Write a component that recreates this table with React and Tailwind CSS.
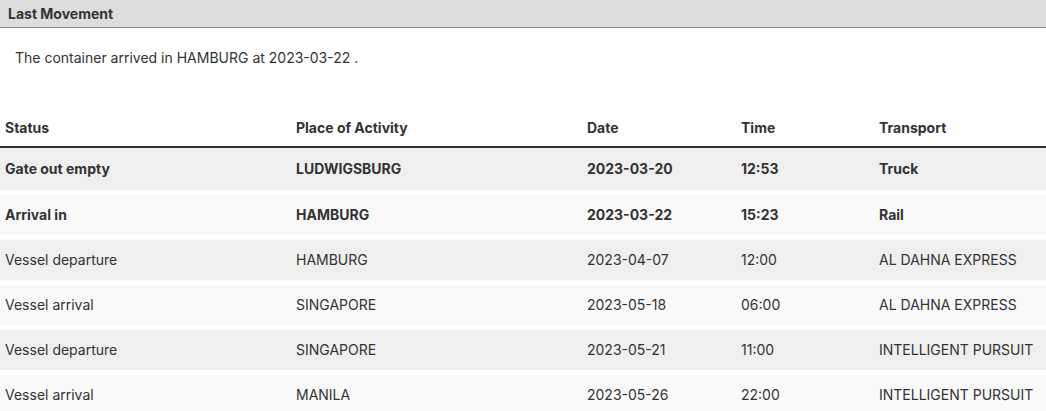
import React from 'react';

const movements = [
  { status: 'Gate out empty', place: 'LUDWIGSBURG', date: '2023-03-20', time: '12:53', transport: 'Truck', done: true },
  { status: 'Arrival in', place: 'HAMBURG', date: '2023-03-22', time: '15:23', transport: 'Rail', done: true },
  { status: 'Vessel departure', place: 'HAMBURG', date: '2023-04-07', time: '12:00', transport: 'AL DAHNA EXPRESS' },
  { status: 'Vessel arrival', place: 'SINGAPORE', date: '2023-05-18', time: '06:00', transport: 'AL DAHNA EXPRESS' },
  { status: 'Vessel departure', place: 'SINGAPORE', date: '2023-05-21', time: '11:00', transport: 'INTELLIGENT PURSUIT' },
  { status: 'Vessel arrival', place: 'MANILA', date: '2023-05-26', time: '22:00', transport: 'INTELLIGENT PURSUIT' },
];

const App = () => {
  return (
    <div className="w-[1046px] bg-white text-[14px] text-[#333] font-['Inter','Liberation_Sans',sans-serif]">
      <div className="h-[28px] bg-[#dddddd] border-b border-[#8c8c8c] px-2 flex items-center font-bold">
        Last Movement
      </div>
      <p className="px-[15px] pt-[19px] h-[80px]">
        The container arrived in HAMBURG at 2023-03-22 .
      </p>
      <table className="w-full border-collapse text-left">
        <thead>
          <tr className="border-b-2 border-[#333]">
            <th className="w-[291px] h-[39px] pl-[5px] font-bold">Status</th>
            <th className="w-[291px] pl-[5px] font-bold">Place of Activity</th>
            <th className="w-[154px] pl-[5px] font-bold">Date</th>
            <th className="w-[138px] pl-[5px] font-bold">Time</th>
            <th className="pl-[5px] font-bold">Transport</th>
          </tr>
        </thead>
        <tbody>
          {movements.map((m, i) => (
            <tr
              key={i}
              className={`h-[45px] border-b-[5px] border-white ${i % 2 === 0 ? 'bg-[#efefef]' : 'bg-[#f9f9f9]'} ${m.done ? 'font-bold' : ''}`}
            >
              <td className="pl-[5px]">{m.status}</td>
              <td className="pl-[5px]">{m.place}</td>
              <td className="pl-[5px]">{m.date}</td>
              <td className="pl-[5px]">{m.time}</td>
              <td className="pl-[5px]">{m.transport}</td>
            </tr>
          ))}
        </tbody>
      </table>
    </div>
  );
};

export default App;
